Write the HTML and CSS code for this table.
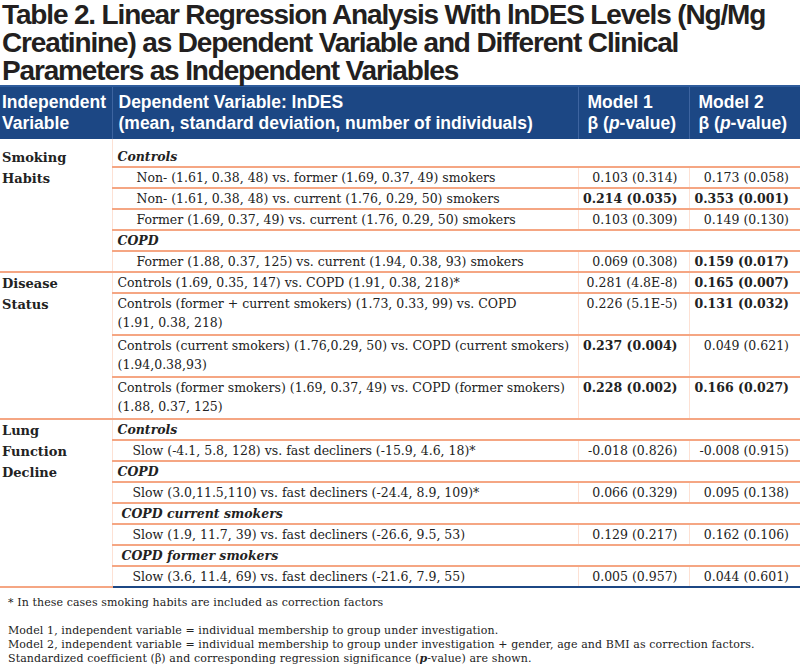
FILE: index.html
```html
<!DOCTYPE html>
<html>
<head>
<meta charset="utf-8">
<link rel="stylesheet" href="styles.css">
</head>
<body>
<h1 class="title">Table 2. Linear Regression Analysis With lnDES Levels (Ng/Mg Creatinine) as Dependent Variable and Different Clinical Parameters as Independent Variables</h1>
<table class="tbl">
  <colgroup>
    <col class="c1"><col class="c2"><col class="c3"><col class="c4">
  </colgroup>
  <thead>
    <tr>
      <th>Independent Variable</th>
      <th>Dependent Variable: lnDES<br>(mean, standard deviation, number of individuals)</th>
      <th>Model 1<br>β (<i>p</i>-value)</th>
      <th>Model 2<br>β (<i>p</i>-value)</th>
    </tr>
  </thead>
  <tbody>
    <tr class="first">
      <td class="grp" rowspan="6">Smoking<br>Habits</td>
      <td class="sub" colspan="3">Controls</td>
    </tr>
    <tr><td class="ind">Non- (1.61, 0.38, 48) vs. former (1.69, 0.37, 49) smokers</td><td class="num">0.103 (0.314)</td><td class="num">0.173 (0.058)</td></tr>
    <tr><td class="ind">Non- (1.61, 0.38, 48) vs. current (1.76, 0.29, 50) smokers</td><td class="num b">0.214 (0.035)</td><td class="num b">0.353 (0.001)</td></tr>
    <tr><td class="ind">Former (1.69, 0.37, 49) vs. current (1.76, 0.29, 50) smokers</td><td class="num">0.103 (0.309)</td><td class="num">0.149 (0.130)</td></tr>
    <tr><td class="sub" colspan="3">COPD</td></tr>
    <tr><td class="ind">Former (1.88, 0.37, 125) vs. current (1.94, 0.38, 93) smokers</td><td class="num">0.069 (0.308)</td><td class="num b">0.159 (0.017)</td></tr>

    <tr>
      <td class="grp" rowspan="4">Disease<br>Status</td>
      <td class="txt">Controls (1.69, 0.35, 147) vs. COPD (1.91, 0.38, 218)*</td><td class="num">0.281 (4.8E-8)</td><td class="num b">0.165 (0.007)</td>
    </tr>
    <tr class="two"><td class="txt">Controls (former + current smokers) (1.73, 0.33, 99) vs. COPD<br>(1.91, 0.38, 218)</td><td class="num">0.226 (5.1E-5)</td><td class="num b">0.131 (0.032)</td></tr>
    <tr class="two"><td class="txt">Controls (current smokers) (1.76,0.29, 50) vs. COPD (current smokers)<br>(1.94,0.38,93)</td><td class="num b">0.237 (0.004)</td><td class="num">0.049 (0.621)</td></tr>
    <tr class="two"><td class="txt">Controls (former smokers) (1.69, 0.37, 49) vs. COPD (former smokers)<br>(1.88, 0.37, 125)</td><td class="num b">0.228 (0.002)</td><td class="num b">0.166 (0.027)</td></tr>

    <tr>
      <td class="grp" rowspan="8">Lung<br>Function<br>Decline</td>
      <td class="sub" colspan="3">Controls</td>
    </tr>
    <tr><td class="ind2">Slow (-4.1, 5.8, 128) vs. fast decliners (-15.9, 4.6, 18)*</td><td class="num">-0.018 (0.826)</td><td class="num">-0.008 (0.915)</td></tr>
    <tr><td class="sub" colspan="3">COPD</td></tr>
    <tr><td class="ind2">Slow (3.0,11.5,110) vs. fast decliners (-24.4, 8.9, 109)*</td><td class="num">0.066 (0.329)</td><td class="num">0.095 (0.138)</td></tr>
    <tr><td class="sub sub2" colspan="3">COPD current smokers</td></tr>
    <tr><td class="ind2">Slow (1.9, 11.7, 39) vs. fast decliners (-26.6, 9.5, 53)</td><td class="num">0.129 (0.217)</td><td class="num">0.162 (0.106)</td></tr>
    <tr><td class="sub sub2" colspan="3">COPD former smokers</td></tr>
    <tr class="end"><td class="ind2">Slow (3.6, 11.4, 69) vs. fast decliners (-21.6, 7.9, 55)</td><td class="num">0.005 (0.957)</td><td class="num">0.044 (0.601)</td></tr>
  </tbody>
</table>
<div class="notes">
  <p class="star">* In these cases smoking habits are included as correction factors</p>
  <p>Model 1, independent variable = individual membership to group under investigation.<br>
  Model 2, independent variable = individual membership to group under investigation + gender, age and BMI as correction factors.<br>
  Standardized coefficient (β) and corresponding regression significance (<b><i>p</i></b>-value) are shown.</p>
</div>
</body>
</html>
```
FILE: styles.css
```css
html, body {
  margin: 0;
  padding: 0;
  background: #fff;
}
body {
  width: 800px;
  font-family: "DejaVu Serif", serif;
  color: #222;
}
.title {
  margin: 0;
  padding: 1px 0 0 2px;
  font-family: "Liberation Sans", Arial, sans-serif;
  font-weight: bold;
  font-size: 28px;
  line-height: 28px;
  letter-spacing: -1.15px;
  color: #231f20;
  height: 85px;
  box-sizing: border-box;
}
.tbl {
  width: 800px;
  border-collapse: collapse;
  table-layout: fixed;
}
.c1 { width: 112px; }
.c2 { width: 466px; }
.c3 { width: 111px; }
.c4 { width: 111px; }
.tbl thead th {
  background: #1c4784;
  color: #fff;
  font-family: "Liberation Sans", Arial, sans-serif;
  font-weight: bold;
  font-size: 17.5px;
  line-height: 21px;
  text-align: left;
  vertical-align: top;
  padding: 5px 6px 5px 6px;
  border-left: 1px solid #3d64a0;
  border-top: 2px solid #2f5c9c;
}
.tbl thead th:first-child {
  border-left: none;
  padding-left: 2px;
}
.tbl thead th:nth-child(3),
.tbl thead th:nth-child(4) {
  padding-left: 9px;
}
.tbl td {
  font-size: 12.5px;
  line-height: 19px;
  padding: 0;
  vertical-align: top;
  border-bottom: 2px solid #f5a683;
  border-left: 1px solid #fde1d4;
}
.tbl tr.two td {
  padding-bottom: 2px;
}
.tbl td.grp {
  font-weight: bold;
  font-size: 13px;
  line-height: 21px;
  padding-left: 2px;
  border-left: none;
  border-bottom: 2px solid #f5a683;
  color: #222;
}
.tbl tr.first td {
  padding-top: 8px;
}
.tbl td.sub {
  font-weight: bold;
  font-style: italic;
  padding-left: 5px;
}
.tbl td.sub2 {
  padding-left: 9px;
}
.tbl td.ind { padding-left: 24px; }
.tbl td.ind2 { padding-left: 20px; }
.tbl td.txt { padding-left: 5px; }
.tbl td.num {
  text-align: right;
  padding-right: 11px;
}
.tbl td.num.b { font-weight: bold; }
.tbl tr.end td { border-bottom: 2px solid #1c4784; }
.notes {
  padding: 8px 0 0 8px;
  font-size: 11px;
  line-height: 14px;
  letter-spacing: 0.1px;
  color: #222;
}
.notes p { margin: 0; }
.notes .star { margin-bottom: 14px; }
```
